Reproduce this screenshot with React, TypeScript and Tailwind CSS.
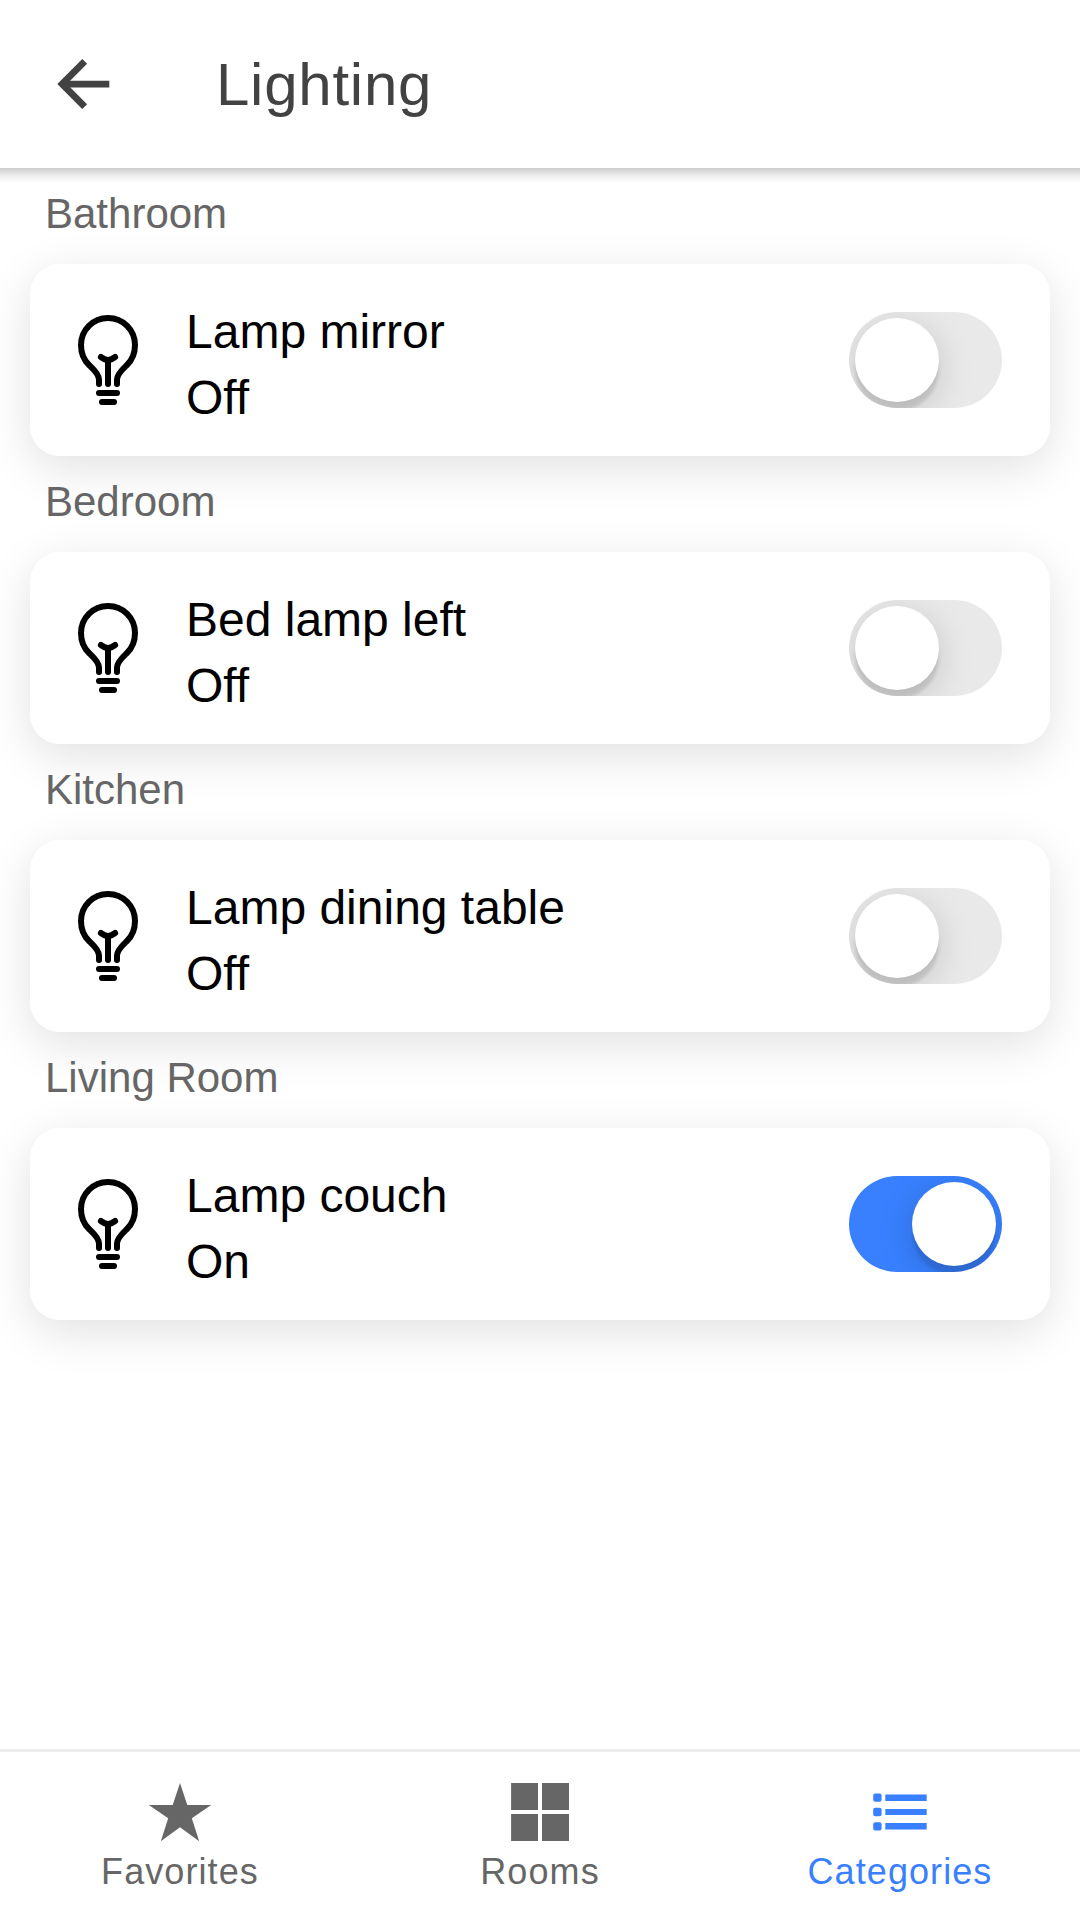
const rooms = [
  { room: 'Bathroom', name: 'Lamp mirror', on: false },
  { room: 'Bedroom', name: 'Bed lamp left', on: false },
  { room: 'Kitchen', name: 'Lamp dining table', on: false },
  { room: 'Living Room', name: 'Lamp couch', on: true },
];

function BackIcon() {
  return (
    <svg viewBox="0 0 512 512" className="size-[72px]" fill="none" stroke="currentColor" strokeWidth="48" strokeLinecap="square" strokeMiterlimit="10">
      <polyline points="244 400 100 256 244 112" />
      <line x1="120" y1="256" x2="412" y2="256" />
    </svg>
  );
}

function BulbIcon() {
  return (
    <svg viewBox="0 0 512 512" className="size-24 shrink-0" fill="none" stroke="currentColor" strokeWidth="32" strokeLinecap="round" strokeLinejoin="round">
      <path d="M304 384v-24c0-29 31.54-56.43 52-76 28.84-27.57 44-64.54 44-108 0-80-63.73-144-144-144a143.6 143.6 0 00-144 144c0 41.84 15.81 81.39 44 108 20.35 19.21 52 46.7 52 76v24" strokeWidth="32" />
      <path d="M224 480h64M208 432h96M256 384V256" />
      <path d="M294 240s-21.51 16-38 16-38-16-38-16" />
    </svg>
  );
}

function StarIcon() {
  return (
    <svg viewBox="0 0 66 66" className="size-[66px]" fill="currentColor">
      <path d="M33 4 40.3 26H64.2L44.8 39.3 52.2 62.2 33 48.2 13.8 62.2 21.2 39.3 1.8 26H25.7z" />
    </svg>
  );
}

function GridIcon() {
  return (
    <svg viewBox="0 0 66 66" className="size-[66px]" fill="currentColor">
      <path d="M4.1 4.1H31V31H4.1zM35 4.1H62V31H35zM4.1 35H31V62H4.1zM35 35H62V62H35z" />
    </svg>
  );
}

function ListIcon() {
  return (
    <svg viewBox="0 0 66 66" className="size-[66px]" fill="currentColor">
      <path d="M18.3 15.4H59.7V21.9H18.3zM18.3 30H59.7V36H18.3zM18.3 44.1H59.7V50.6H18.3z" />
      <rect x="6.2" y="14.4" width="8.4" height="8.4" rx="2" />
      <rect x="6.2" y="28.8" width="8.4" height="8.4" rx="2" />
      <rect x="6.2" y="43.2" width="8.4" height="8.4" rx="2" />
    </svg>
  );
}

function Toggle({ on }: { on: boolean }) {
  return (
    <div className={`flex h-24 w-[153px] shrink-0 items-center overflow-hidden rounded-full px-1.5 ${on ? 'justify-end bg-[#3880ff]' : 'justify-start bg-[#e9e9e9]'}`}>
      <div className="size-[84px] rounded-full bg-white shadow-[0_9px_36px_rgba(0,0,0,0.16),0_9px_3px_rgba(0,0,0,0.1)]" />
    </div>
  );
}

export default function App() {
  return (
    <div className="flex h-[1920px] w-[1080px] flex-col overflow-hidden bg-white font-['Liberation_Sans',Arial,sans-serif]">
      <header className="relative z-10 flex h-[168px] shrink-0 items-center bg-white px-12 text-[#424242]">
        <BackIcon />
        <h1 className="ml-24 pt-0.5 text-[60px] leading-[72px] tracking-[0.0125em]">Lighting</h1>
        <div className="absolute inset-x-0 top-full h-[15px] bg-linear-to-b from-black/20 via-black/7 to-transparent" />
      </header>
      <main className="flex-1">
        {rooms.map((r) => (
          <section key={r.room}>
            <h2 className="flex h-24 items-center pl-[45px] pb-1 text-[42px] leading-[48px] text-[#666666]">
              <span>{r.room}</span>
            </h2>
            <div className="mx-[30px] flex h-48 items-center rounded-[30px] bg-white pr-12 pl-[30px] text-black shadow-[0_12px_48px_rgba(0,0,0,0.12)]">
              <BulbIcon />
              <div className="ml-[30px] flex-1 pt-2.5 text-[48px] leading-[66px]">
                <div>{r.name}</div>
                <div>{r.on ? 'On' : 'Off'}</div>
              </div>
              <Toggle on={r.on} />
            </div>
          </section>
        ))}
      </main>
      <nav className="grid h-[171px] shrink-0 grid-cols-3 border-t-[3px] border-[#ededed] bg-white text-[36px] leading-[42px] tracking-[0.03em] text-[#666666]">
        <div className="flex flex-col items-center pt-[27px]">
          <StarIcon />
          <span className="mt-1.5">Favorites</span>
        </div>
        <div className="flex flex-col items-center pt-[27px]">
          <GridIcon />
          <span className="mt-1.5">Rooms</span>
        </div>
        <div className="flex flex-col items-center pt-[27px] text-[#3880ff]">
          <ListIcon />
          <span className="mt-1.5">Categories</span>
        </div>
      </nav>
    </div>
  );
}
